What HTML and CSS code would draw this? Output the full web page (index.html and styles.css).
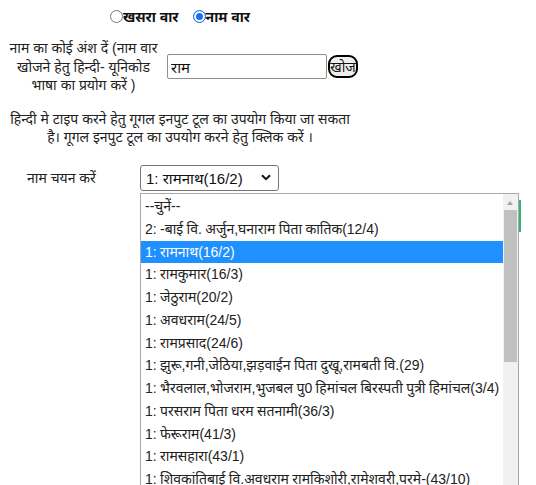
FILE: index.html
```html
<!DOCTYPE html>
<html lang="hi">
<head>
<meta charset="utf-8">
<title>नाम खोज</title>
<link rel="stylesheet" href="styles.css">
</head>
<body>
<div class="page">
  <div class="radios">
    <label class="opt"><span class="radio"></span>खसरा वार</label>
    <label class="opt"><span class="radio on"></span>नाम वार</label>
  </div>
  <div class="search">
    <div class="hint">नाम का कोई अंश दें (नाम वार<br>खोजने हेतु हिन्दी- यूनिकोड<br>भाषा का प्रयोग करें )</div>
    <div class="field">
      <input class="input" type="text" value="राम">
      <button class="btn" type="button">खोज</button>
    </div>
  </div>
  <p class="note">हिन्दी मे टाइप करने हेतु गूगल इनपुट टूल का उपयोग किया जा सकता<br>है। गूगल इनपुट टूल का उपयोग करने हेतु क्लिक करें ।</p>
  <div class="pick">
    <span class="pick-label">नाम चयन करें</span>
    <div class="select">
      <span>1: रामनाथ(16/2)</span>
      <svg class="chev" width="10" height="7" viewBox="0 0 10 7"><path d="M1 1.2 L5 5.2 L9 1.2" fill="none" stroke="#111" stroke-width="2"/></svg>
    </div>
  </div>
</div>
<div class="behind"></div>
<div class="popup">
  <ul class="list">
    <li class="item">--चुनें--</li>
    <li class="item">2: -बाई वि. अर्जुन,घनाराम पिता कातिक(12/4)</li>
    <li class="item sel">1: रामनाथ(16/2)</li>
    <li class="item">1: रामकुमार(16/3)</li>
    <li class="item">1: जेठुराम(20/2)</li>
    <li class="item">1: अवधराम(24/5)</li>
    <li class="item">1: रामप्रसाद(24/6)</li>
    <li class="item">1: झुरू,गनी,जेठिया,झड़वाईन पिता दुखू,रामबती वि.(29)</li>
    <li class="item">1: भैरवलाल,भोजराम,भुजबल पु0 हिमांचल बिरस्पती पुत्री हिमांचल(3/4)</li>
    <li class="item">1: परसराम पिता धरम सतनामी(36/3)</li>
    <li class="item">1: फेरूराम(41/3)</li>
    <li class="item">1: रामसहारा(43/1)</li>
    <li class="item">1: शिवकांतिबाई वि.अवधराम रामकिशोरी,रामेशवरी,परमे-(43/10)</li>
  </ul>
  <div class="scroll">
    <span class="arrow"></span>
    <span class="thumb"></span>
  </div>
</div>
</body>
</html>
```
FILE: styles.css
```css
html, body {
  margin: 0;
  padding: 0;
  background: #fff;
  color: #222;
  font-family: "Liberation Sans", Arial, "Noto Sans", sans-serif;
}
.page {
  width: 360px;
  padding-top: 6px;
}
.radios {
  display: flex;
  justify-content: center;
  gap: 14px;
  height: 20px;
  align-items: center;
  font-size: 14px;
  font-weight: bold;
  color: #111;
}
.opt {
  display: flex;
  align-items: center;
}
.radio {
  width: 11px;
  height: 11px;
  border: 1px solid #767676;
  border-radius: 50%;
  margin-right: 0;
  box-sizing: content-box;
}
.radio.on {
  border-color: #1a73e8;
  background: #1a73e8;
  box-shadow: inset 0 0 0 2px #fff;
}
.search {
  display: flex;
  align-items: center;
  margin-top: 13px;
}
.hint {
  width: 167px;
  text-align: center;
  font-size: 14px;
  line-height: 18.5px;
  color: #222;
}
.field {
  display: flex;
  align-items: center;
}
.input {
  width: 160px;
  height: 25px;
  box-sizing: border-box;
  border: 1px solid #8f8f8f;
  border-radius: 2px;
  padding: 0 3px;
  font-family: inherit;
  font-size: 15px;
  color: #111;
  margin: 0;
}
.btn {
  width: 30px;
  height: 23px;
  box-sizing: border-box;
  border: 2px solid #000;
  border-radius: 9px;
  background: #efefef;
  padding: 0;
  margin: 0 0 0 1px;
  font-family: inherit;
  font-size: 14px;
  color: #111;
}
.note {
  margin: 15px 0 0;
  text-align: center;
  font-size: 14px;
  line-height: 18px;
  color: #222;
}
.pick {
  display: flex;
  align-items: center;
  margin-top: 19px;
}
.pick-label {
  width: 140px;
  padding-left: 27px;
  box-sizing: border-box;
  font-size: 14px;
  color: #222;
}
.select {
  width: 139px;
  height: 26px;
  box-sizing: border-box;
  border: 1px solid #767676;
  border-radius: 3px;
  padding: 0 7px 0 5px;
  display: flex;
  align-items: center;
  justify-content: space-between;
  font-size: 15px;
  color: #111;
}
.behind {
  position: absolute;
  left: 519px;
  top: 200px;
  width: 2px;
  height: 32px;
  background: #2eb872;
}
.popup {
  position: absolute;
  left: 140px;
  top: 193px;
  width: 379px;
  height: 300px;
  box-sizing: border-box;
  border: 1px solid #a9a9a9;
  background: #fff;
  overflow: hidden;
}
.list {
  list-style: none;
  margin: 0;
  padding: 1px 15px 0 0;
}
.item {
  height: 22.75px;
  line-height: 22.75px;
  padding-left: 4px;
  font-size: 14px;
  word-spacing: -0.5px;
  color: #222;
  white-space: nowrap;
}
.item.sel {
  background: #1e90ff;
  color: #fff;
}
.scroll {
  position: absolute;
  right: 0;
  top: 0;
  bottom: 0;
  width: 15px;
  background: #f1f1f1;
}
.arrow {
  position: absolute;
  left: 4px;
  top: 7px;
  width: 0;
  height: 0;
  border-left: 3.5px solid transparent;
  border-right: 3.5px solid transparent;
  border-bottom: 4px solid #a3a3a3;
}
.thumb {
  position: absolute;
  left: 1px;
  top: 16px;
  width: 13px;
  height: 152px;
  background: #c1c1c1;
}
```
